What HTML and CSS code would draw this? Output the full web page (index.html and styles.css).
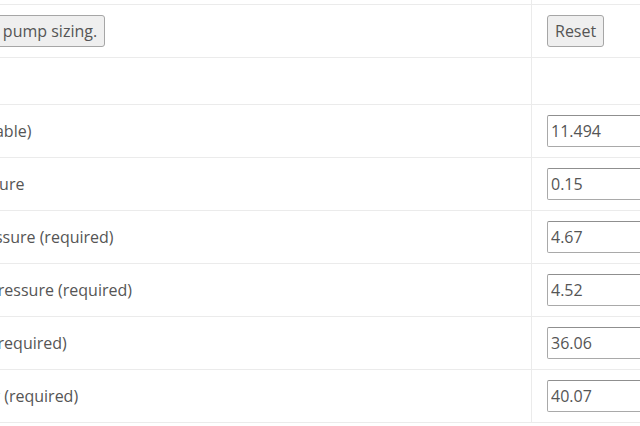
FILE: index.html
```html
<!DOCTYPE html>
<html lang="en">
<head>
    <meta charset="UTF-8">
    <title>Pump Sizing</title>
    <link rel="stylesheet" href="styles.css">
</head>
<body>
    <div class="sizing-form">
        <div class="cell label"></div>
        <div class="cell value"></div>

        <div class="cell label"><button type="button">Proceed to pump sizing.</button></div>
        <div class="cell value"><button type="reset">Reset</button></div>

        <div class="cell label blank"></div>
        <div class="cell value blank"></div>

        <div class="cell label">NPSH (available)</div>
        <div class="cell value"><input type="text" value="11.494"></div>

        <div class="cell label">Vapor pressure</div>
        <div class="cell value"><input type="text" value="0.15"></div>

        <div class="cell label">Suction pressure (required)</div>
        <div class="cell value"><input type="text" value="4.67"></div>

        <div class="cell label">Discharge pressure (required)</div>
        <div class="cell value"><input type="text" value="4.52"></div>

        <div class="cell label">Total head (required)</div>
        <div class="cell value"><input type="text" value="36.06"></div>

        <div class="cell label last">Shaft power (required)</div>
        <div class="cell value last"><input type="text" value="40.07"></div>
    </div>
</body>
</html>
```

FILE: styles.css
```css
body, html {
    margin: 0;
    padding: 0;
    background-color: #fff;
    font-family: 'Open Sans', 'Noto Sans', sans-serif;
    font-size: 16px;
    color: #555;
    overflow: hidden;
}
.sizing-form {
    display: grid;
    grid-template-columns: 636px 300px;
    margin: -49px 0 0 -105px;
}
.cell {
    display: flex;
    align-items: center;
    min-height: 32px;
    padding: 10px 15px;
    border-top: 1px solid #ebebeb;
    white-space: nowrap;
}
.cell.value {
    border-left: 1px solid #ebebeb;
}
.cell.blank {
    min-height: 26px;
}
.cell.last {
    border-bottom: 1px solid #ebebeb;
}
button {
    height: 32px;
    padding: 0 7px;
    font-family: inherit;
    font-size: 16px;
    color: #555;
    background-color: #efefef;
    border: 1px solid #a6a6a6;
    border-radius: 3px;
}
input[type="text"] {
    width: 200px;
    height: 32px;
    box-sizing: border-box;
    padding: 0 3px;
    font-family: inherit;
    font-size: 16px;
    color: #555;
    border: 1px solid #a9a9a9;
    border-top-color: #8f8f8f;
    border-radius: 2px;
}
```
